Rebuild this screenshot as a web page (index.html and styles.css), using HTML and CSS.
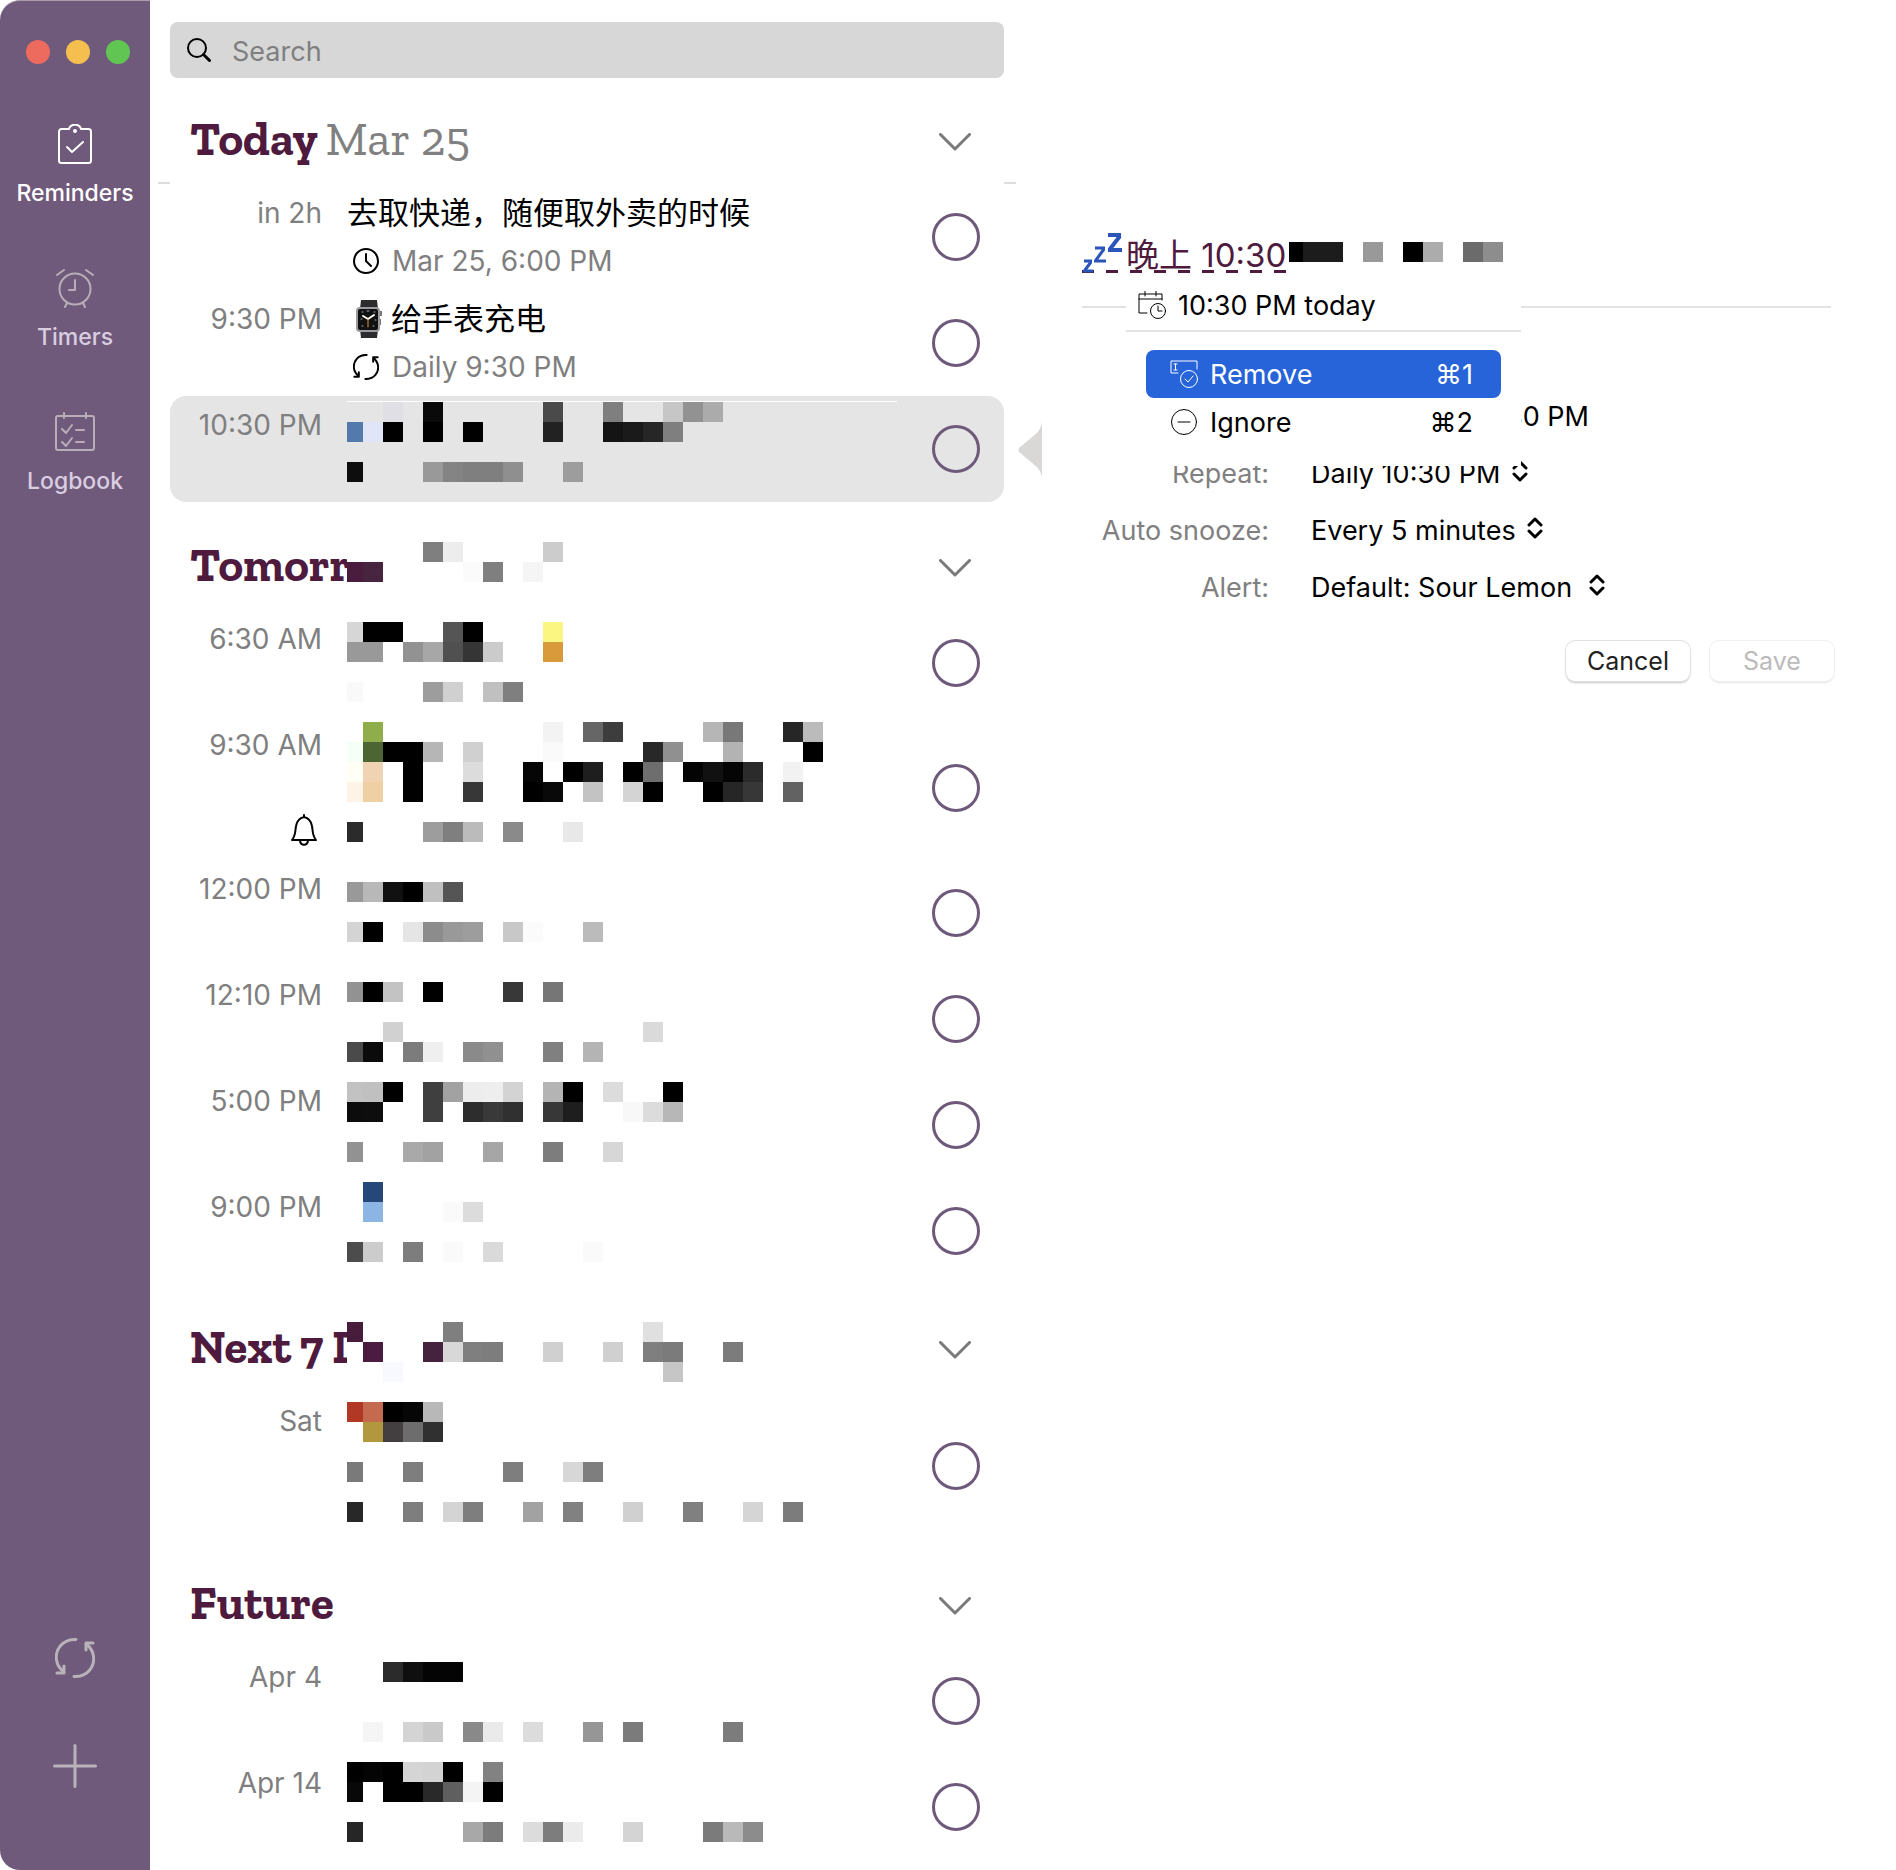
FILE: index.html
```html
<!DOCTYPE html>
<html lang="zh-CN">
<head>
<meta charset="utf-8">
<title>Reminders</title>
<link rel="stylesheet" href="styles.css">
</head>
<body>
<div class="window">
  <nav class="sidebar">
    <div class="lights"><span class="light light-close"></span><span class="light light-min"></span><span class="light light-max"></span></div>
    <a class="nav-item active" href="#reminders">
      <svg class="nav-icon" viewBox="0 0 40 40"><path d="M14 5H6.500a2.500 2.500 0 0 0-2.500 2.500v29A2.500 2.500 0 0 0 6.500 39h27a2.500 2.500 0 0 0 2.500-2.500v-29A2.500 2.500 0 0 0 33.500 5H26q-1-4-6-4.500-5 .5-6 4.500"/><circle cx="20" cy="7" r="1"/><path d="M12 23l5 5 11-10"/></svg>
      Reminders
    </a>
    <a class="nav-item" href="#timers">
      <svg class="nav-icon" viewBox="0 0 40 40"><circle cx="20" cy="21" r="15.500"/><path d="M20 12v10h-6M2 7l7-5M38 7l-7-5M12 35l-2 4M28 35l2 4"/></svg>
      Timers
    </a>
    <a class="nav-item" href="#logbook">
      <svg class="nav-icon" viewBox="0 0 40 40"><rect x="1" y="4" width="38" height="34" rx="2"/><path d="M9 1v5M31 1v5M7 17l4 4 6-8M7 30l4 4 6-8M21 18h8M21 30h8"/></svg>
      Logbook
    </a>
    <div class="side-tools">
      <button class="side-button" aria-label="Sync"><svg class="sync-icon" viewBox="0 0 40 40"><path d="M21 1.500C7 1 0 12 1.500 22c.7 5 3.500 9 7.500 12M2 35h7v-7M19 38.500c14 .5 21-10.500 19.500-20.500-.7-5-3.500-9-7.500-12M38 5h-7v7"/></svg></button>
      <button class="side-button" aria-label="Add"><svg class="plus-icon" viewBox="0 0 44 44"><path d="M22 1.500v41M1.500 22h41"/></svg></button>
    </div>
  </nav>

  <main class="list">
    <label class="search">
      <svg class="search-icon" viewBox="0 0 24 24"><circle cx="10" cy="10" r="9"/><path d="M16.500 16.500l6 6" stroke-width="3"/></svg>
      <input class="search-input" type="search" placeholder="Search" aria-label="Search">
    </label>

    <section class="section first">
      <header class="section-head"><h2>Today <span class="date">Mar 25</span></h2><button class="fold" aria-label="Collapse"><svg viewBox="0 0 32 18"><path d="M1.500 1.500L16 16 30.500 1.500"/></svg></button></header>
      <ul class="rows">
        <li class="row"><span class="time">in 2h</span>
          <div class="body"><div class="title">去取快递，随便取外卖的时候</div>
            <div class="sub"><svg class="sub-icon" viewBox="0 0 26 26"><circle cx="13" cy="13" r="12"/><path d="M13 6v7l5 5"/></svg>Mar 25, 6:00 PM</div></div>
          <input class="check" type="checkbox" aria-label="Done"></li>
        <li class="row"><span class="time">9:30 PM</span>
          <div class="body"><div class="title"><svg class="watch" viewBox="0 0 28 38"><path fill="#2c2c2e" d="M6 0h16l1 9H5zM5 29h18l-1 9H6z"/><rect x="1" y="7" width="24" height="25" rx="4" fill="#9c9c9e"/><rect x="3" y="9" width="20" height="21" rx="2" fill="#111"/><path fill="#777" d="M25 11h2v5h-2zM25 19h1v6h-1z"/><path d="M13 19l6-4M13 19l-5-3" stroke="#fff" stroke-width="2"/><path d="M13 19v8" stroke="#d99a3c"/><path d="M12 11h2M6 19h1M20 20h1M7 12h1M19 12h1M7 26h1M18 26h1" stroke="#aaa"/></svg>给手表充电</div>
            <div class="sub"><svg class="sub-icon" viewBox="0 0 40 40"><path class="thick" d="M21 1.500C7 1 0 12 1.500 22c.7 5 3.500 9 7.500 12M2 35h7v-7M19 38.500c14 .5 21-10.500 19.500-20.500-.7-5-3.500-9-7.500-12M38 5h-7v7"/></svg>Daily 9:30 PM</div></div>
          <input class="check" type="checkbox" aria-label="Done"></li>
        <li class="row selected"><span class="time">10:30 PM</span><div class="body"></div><input class="check" type="checkbox" aria-label="Done"></li>
      </ul>
    </section>

    <section class="section">
      <header class="section-head"><h2>Tomorrow</h2><button class="fold" aria-label="Collapse"><svg viewBox="0 0 32 18"><path d="M1.500 1.500L16 16 30.500 1.500"/></svg></button></header>
      <ul class="rows">
        <li class="row"><span class="time">6:30 AM</span><div class="body"></div><input class="check" type="checkbox" aria-label="Done"></li>
        <li class="row two-line"><div class="time">9:30 AM<svg class="bell" viewBox="0 0 28 32"><path d="M2 26c4-5 3-9 4-14 1-6 4-8 8-9 4 1 7 3 8 9 1 5 0 9 4 14zM14 1v2M10 27c1 5 7 5 8 0"/></svg></div><div class="body"></div><input class="check" type="checkbox" aria-label="Done"></li>
        <li class="row"><span class="time">12:00 PM</span><div class="body"></div><input class="check" type="checkbox" aria-label="Done"></li>
        <li class="row"><span class="time">12:10 PM</span><div class="body"></div><input class="check" type="checkbox" aria-label="Done"></li>
        <li class="row"><span class="time">5:00 PM</span><div class="body"></div><input class="check" type="checkbox" aria-label="Done"></li>
        <li class="row"><span class="time">9:00 PM</span><div class="body"></div><input class="check" type="checkbox" aria-label="Done"></li>
      </ul>
    </section>

    <section class="section">
      <header class="section-head"><h2>Next 7 Days</h2><button class="fold" aria-label="Collapse"><svg viewBox="0 0 32 18"><path d="M1.500 1.500L16 16 30.500 1.500"/></svg></button></header>
      <ul class="rows">
        <li class="row with-note"><span class="time">Sat</span><div class="body"></div><input class="check" type="checkbox" aria-label="Done"></li>
      </ul>
    </section>

    <section class="section">
      <header class="section-head"><h2>Future</h2><button class="fold" aria-label="Collapse"><svg viewBox="0 0 32 18"><path d="M1.500 1.500L16 16 30.500 1.500"/></svg></button></header>
      <ul class="rows">
        <li class="row"><span class="time">Apr 4</span><div class="body"></div><input class="check" type="checkbox" aria-label="Done"></li>
        <li class="row"><span class="time">Apr 14</span><div class="body"></div><input class="check" type="checkbox" aria-label="Done"></li>
      </ul>
    </section>

    <!-- Privacy mosaic laid over the list, one unit per cell -->
    <svg class="mosaic" viewBox="0.2 0 24.800 72" aria-hidden="true">
      <g fill="#fff"><path d="M0 7h12v4H0zM0 45h15v4H0z"/></g>
      <g><rect x="2" fill="#e1dfe6"/><rect x="4" fill="#0a0a0a"/><rect x="10" fill="#4a4a4a"/><rect x="13" fill="#7f7f7f"/><rect x="16" fill="#c6c6c6"/><rect x="17" fill="#929292"/><rect x="18" fill="#ababab"/></g>
      <g transform="translate(0 1)"><rect fill="#5479ac"/><rect x="1" fill="#e0e6f7"/><rect x="2"/><rect x="4"/><rect x="6"/><rect x="10" fill="#222"/><rect x="13" fill="#141414"/><rect x="14" fill="#1a1a1a"/><rect x="15" fill="#262626"/><rect x="16" fill="#7f7f7f"/></g>
      <g transform="translate(0 3)"><rect fill="#0d0d0d"/><rect x="4" fill="#999"/><rect x="5" fill="#848484"/><rect x="6" fill="#7f7f7f"/><rect x="7" fill="#7f7f7f"/><rect x="8" fill="#8f8f8f"/><rect x="11" fill="#9d9d9d"/></g>
      <g transform="translate(0 7)"><rect x="4" fill="#7f7f7f"/><rect x="5" fill="#ededed"/><rect x="10" fill="#ccc"/></g>
      <g transform="translate(0 8)"><rect fill="#4a1d3f"/><rect x="1" fill="#47243f"/><rect x="6" fill="#fbfbfb"/><rect x="7" fill="#7f7f7f"/><rect x="9" fill="#f5f5f5"/></g>
      <g transform="translate(0 11)"><rect fill="#d6d6d6"/><rect x="1"/><rect x="2"/><rect x="5" fill="#555"/><rect x="6"/><rect x="10" fill="#fbf682"/></g>
      <g transform="translate(0 12)"><rect fill="#999"/><rect x="1" fill="#999"/><rect x="3" fill="#929292"/><rect x="4" fill="#a7a7a7"/><rect x="5" fill="#505050"/><rect x="6" fill="#353535"/><rect x="7" fill="#cbcbcb"/><rect x="10" fill="#d99a3c"/></g>
      <g transform="translate(0 14)"><rect fill="#f9f9f9"/><rect x="4" fill="#9d9d9d"/><rect x="5" fill="#d0d0d0"/><rect x="7" fill="#c0c0c0"/><rect x="8" fill="#7f7f7f"/></g>
      <g transform="translate(0 16)"><rect x="1" fill="#8fae4b"/><rect x="10" fill="#f3f3f3"/><rect x="12" fill="#666"/><rect x="13" fill="#3d3d3d"/><rect x="18" fill="#b6b6b6"/><rect x="19" fill="#787878"/><rect x="22" fill="#262626"/><rect x="23" fill="#bbb"/></g>
      <g transform="translate(0 17)"><rect fill="#f5fff5"/><rect x="1" fill="#4d6532"/><rect x="2"/><rect x="3"/><rect x="4" fill="#b6b6b6"/><rect x="6" fill="#d0d0d0"/><rect x="10" fill="#fafafa"/><rect x="15" fill="#282828"/><rect x="16" fill="#909090"/><rect x="19" fill="#b3b3b3"/><rect x="23"/></g>
      <g transform="translate(0 18)"><rect fill="#fffff5"/><rect x="1" fill="#efd3b2"/><rect x="3"/><rect x="6" fill="#dcdcdc"/><rect x="9" fill="#060606"/><rect x="11"/><rect x="12" fill="#1e1e1e"/><rect x="14"/><rect x="15" fill="#6e6e6e"/><rect x="17" fill="#040404"/><rect x="18" fill="#111"/><rect x="19" fill="#050505"/><rect x="20" fill="#2b2b2b"/><rect x="22" fill="#f2f2f2"/></g>
      <g transform="translate(0 19)"><rect fill="#fdf3e6"/><rect x="1" fill="#efcfa4"/><rect x="3"/><rect x="6" fill="#373737"/><rect x="9"/><rect x="10" fill="#090909"/><rect x="12" fill="#c3c3c3"/><rect x="14" fill="#d4d4d4"/><rect x="15"/><rect x="18"/><rect x="19" fill="#262626"/><rect x="20" fill="#373737"/><rect x="22" fill="#626262"/></g>
      <g transform="translate(0 21)"><rect fill="#2b2b2b"/><rect x="4" fill="#9d9d9d"/><rect x="5" fill="#7f7f7f"/><rect x="6" fill="#bbb"/><rect x="8" fill="#8a8a8a"/><rect x="11" fill="#e8e8e8"/></g>
      <g transform="translate(0 24)"><rect fill="#999"/><rect x="1" fill="#b8b8b8"/><rect x="2" fill="#111"/><rect x="3"/><rect x="4" fill="#c0c0c0"/><rect x="5" fill="#555"/></g>
      <g transform="translate(0 26)"><rect fill="#d4d4d4"/><rect x="1"/><rect x="3" fill="#e5e5e5"/><rect x="4" fill="#8c8c8c"/><rect x="5" fill="#999"/><rect x="6" fill="#9d9d9d"/><rect x="8" fill="#c8c8c8"/><rect x="9" fill="#fbfbfb"/><rect x="12" fill="#bbb"/></g>
      <g transform="translate(0 29)"><rect fill="#929292"/><rect x="1"/><rect x="2" fill="#c3c3c3"/><rect x="4"/><rect x="8" fill="#383838"/><rect x="10" fill="#767676"/></g>
      <g transform="translate(0 31)"><rect x="2" fill="#d1d1d1"/><rect x="15" fill="#dadada"/></g>
      <g transform="translate(0 32)"><rect fill="#4a4a4a"/><rect x="1" fill="#0b0b0b"/><rect x="3" fill="#7c7c7c"/><rect x="4" fill="#efefef"/><rect x="6" fill="#8a8a8a"/><rect x="7" fill="#909090"/><rect x="10" fill="#808080"/><rect x="12" fill="#b4b4b4"/></g>
      <g transform="translate(0 34)"><rect fill="#c2c2c2"/><rect x="1" fill="#c0c0c0"/><rect x="2"/><rect x="4" fill="#3f3f3f"/><rect x="5" fill="#a2a2a2"/><rect x="6" fill="#ededed"/><rect x="7" fill="#eee"/><rect x="8" fill="#d3d3d3"/><rect x="10" fill="#b4b4b4"/><rect x="11"/><rect x="13" fill="#dcdcdc"/><rect x="16"/></g>
      <g transform="translate(0 35)"><rect fill="#0c0c0c"/><rect x="1" fill="#0d0d0d"/><rect x="4" fill="#3f3f3f"/><rect x="6" fill="#2d2d2d"/><rect x="7" fill="#393939"/><rect x="8" fill="#303030"/><rect x="10" fill="#373737"/><rect x="11" fill="#1e1e1e"/><rect x="14" fill="#f8f8f8"/><rect x="15" fill="#dcdcdc"/><rect x="16" fill="#b7b7b7"/></g>
      <g transform="translate(0 37)"><rect fill="#929292"/><rect x="3" fill="#a9a9a9"/><rect x="4" fill="#a2a2a2"/><rect x="7" fill="#a6a6a6"/><rect x="10" fill="#7d7d7d"/><rect x="13" fill="#d7d7d7"/></g>
      <g transform="translate(0 39)"><rect x="1" fill="#254879"/></g>
      <g transform="translate(0 40)"><rect x="1" fill="#8cb5e3"/><rect x="5" fill="#fafafa"/><rect x="6" fill="#dcdcdc"/></g>
      <g transform="translate(0 42)"><rect fill="#4c4c4c"/><rect x="1" fill="#ccc"/><rect x="3" fill="#7d7d7d"/><rect x="5" fill="#fafafa"/><rect x="7" fill="#dadada"/><rect x="12" fill="#fafafa"/></g>
      <g transform="translate(0 46)"><rect fill="#471d3b"/><rect x="5" fill="#7f7f7f"/><rect x="15" fill="#e0e0e0"/></g>
      <g transform="translate(0 47)"><rect x="1" fill="#4b1b42"/><rect x="4" fill="#45223d"/><rect x="5" fill="#d8d8d8"/><rect x="6" fill="#7f7f7f"/><rect x="7" fill="#7d7d7d"/><rect x="10" fill="#d0d0d0"/><rect x="13" fill="#d0d0d0"/><rect x="15" fill="#7f7f7f"/><rect x="16" fill="#7b7b7b"/><rect x="19" fill="#7c7c7c"/></g>
      <g transform="translate(0 48)"><rect x="2" fill="#f7f9ff"/><rect x="16" fill="#c6c6c6"/></g>
      <g transform="translate(0 50)"><rect fill="#b03824"/><rect x="1" fill="#c46a4f"/><rect x="2"/><rect x="3" fill="#060606"/><rect x="4" fill="#b8b8b8"/></g>
      <g transform="translate(0 51)"><rect x="1" fill="#b1973e"/><rect x="2" fill="#433e3f"/><rect x="3" fill="#6d6d6d"/><rect x="4" fill="#303030"/></g>
      <g transform="translate(0 53)"><rect fill="#7a7a7a"/><rect x="3" fill="#7e7e7e"/><rect x="8" fill="#7e7e7e"/><rect x="11" fill="#d7d7d7"/><rect x="12" fill="#7e7e7e"/></g>
      <g transform="translate(0 55)"><rect fill="#282828"/><rect x="3" fill="#7e7e7e"/><rect x="5" fill="#d4d4d4"/><rect x="6" fill="#7e7e7e"/><rect x="9" fill="#a2a2a2"/><rect x="11" fill="#818181"/><rect x="14" fill="#d0d0d0"/><rect x="17" fill="#808080"/><rect x="20" fill="#d5d5d5"/><rect x="22" fill="#7c7c7c"/></g>
      <g transform="translate(0 63)"><rect x="2" fill="#2b2b2b"/><rect x="3" fill="#0f0f0f"/><rect x="4" fill="#040404"/><rect x="5" fill="#040404"/></g>
      <g transform="translate(0 66)"><rect x="1" fill="#f5f5f5"/><rect x="3" fill="#d4d4d4"/><rect x="4" fill="#c9c9c9"/><rect x="6" fill="#898989"/><rect x="7" fill="#eaeaea"/><rect x="9" fill="#dcdcdc"/><rect x="12" fill="#969696"/><rect x="14" fill="#7b7b7b"/><rect x="19" fill="#7c7c7c"/></g>
      <g transform="translate(0 68)"><rect/><rect x="1" fill="#040404"/><rect x="2"/><rect x="3" fill="#d5d5d5"/><rect x="4" fill="#d3d3d3"/><rect x="5"/><rect x="7" fill="#828282"/></g>
      <g transform="translate(0 69)"><rect fill="#080808"/><rect x="2"/><rect x="3"/><rect x="4" fill="#292929"/><rect x="5" fill="#5f5f5f"/><rect x="6" fill="#f4f4f4"/><rect x="7"/></g>
      <g transform="translate(0 71)"><rect fill="#262626"/><rect x="6" fill="#a8a8a8"/><rect x="7" fill="#7c7c7c"/><rect x="9" fill="#dcdcdc"/><rect x="10" fill="#7d7d7d"/><rect x="11" fill="#ebebeb"/><rect x="14" fill="#d4d4d4"/><rect x="18" fill="#7b7b7b"/><rect x="19" fill="#b9b9b9"/><rect x="20" fill="#8c8c8c"/></g>
    </svg>
  </main>

  <aside class="detail">
    <svg class="pointer" viewBox="0 0 24 58"><path d="M24 0q0 6-5 12L1 27q-1 2 0 4l18 15q5 6 5 12z"/></svg>
    <div class="heading">
      <div class="heading-text"><svg class="zzz" viewBox="0 0 40 40"><path d="M26 2h13M38 3L28 16M26 17h14" stroke-width="4"/><path d="M13 15h10M22 16l-8 11M12 28h12M2 28h8M9 29l-6 8M1 38h10" stroke-width="3"/></svg>晚上 10:30</div>
      <svg class="heading-mosaic" viewBox="0 0 214 20" aria-hidden="true"><path d="M0 0h14v20H0zM114 0h20v20h-20z"/><path fill="#1c1c1c" d="M14 0h40v20H14z"/><path fill="#999" d="M74 0h20v20H74z"/><path fill="#acacac" d="M134 0h20v20h-20z"/><path fill="#6b6b6b" d="M174 0h20v20h-20z"/><path fill="#8d8d8d" d="M194 0h20v20h-20z"/></svg>
    </div>
    <hr class="rule">
    <form class="form">
      <div class="field"><span class="label"></span><span class="when">10:30 PM</span></div>
      <div class="field"><label class="label" for="repeat">Repeat:</label><select class="value" id="repeat"><option>Daily 10:30 PM</option></select><svg class="updown" viewBox="0 0 16 22"><path d="M2 8l6-6 6 6M2 14l6 6 6-6"/></svg></div>
      <div class="field"><label class="label" for="snooze">Auto snooze:</label><select class="value" id="snooze"><option>Every 5 minutes</option></select><svg class="updown" viewBox="0 0 16 22"><path d="M2 8l6-6 6 6M2 14l6 6 6-6"/></svg></div>
      <div class="field"><label class="label" for="alert">Alert:</label><select class="value" id="alert"><option>Default: Sour Lemon</option></select><svg class="updown wide" viewBox="0 0 16 22"><path d="M2 8l6-6 6 6M2 14l6 6 6-6"/></svg></div>
      <div class="actions"><button class="button" type="button">Cancel</button><button class="button" type="submit" disabled>Save</button></div>
    </form>
    <div class="menu">
      <div class="menu-head"><svg class="menu-icon" viewBox="0 0 28 28"><path d="M9 22H1V3h23v6M1 8h23M7 0v5M18 0v5"/><circle cx="20" cy="20" r="7.500"/><path d="M20 15v5h4"/></svg>10:30 PM today</div>
      <button class="menu-item chosen"><svg class="menu-icon" viewBox="0 0 28 28"><path d="M8 13H1V1h26v8M4 4h3M4 10h3M5.500 4v6"/><circle cx="19" cy="19" r="8.500"/><path d="M15 19l3 3 5-6"/></svg>Remove<kbd>⌘1</kbd></button>
      <button class="menu-item"><svg class="menu-icon" viewBox="0 0 28 28"><circle cx="14" cy="14" r="12.500"/><path d="M8 14h12"/></svg>Ignore<kbd>⌘2</kbd></button>
    </div>
  </aside>
</div>
</body>
</html>
```
FILE: styles.css
```css
* { box-sizing: border-box; }

body {
  margin: 0;
  background: #fff;
  color: #000;
  font-family: Inter, "Noto Sans CJK SC", "Liberation Sans", sans-serif;
  font-size: 27px;
}

button, input, select { font: inherit; color: inherit; margin: 0; }
button { border: 0; padding: 0; background: none; }
svg { display: block; fill: none; flex: none; stroke-linecap: round; stroke-linejoin: round; }

.window {
  display: grid;
  grid-template-columns: 150px 868fr 878fr;
  min-height: 100vh;
}

/* Sidebar */
.sidebar {
  display: flex;
  flex-direction: column;
  background: #705a7c;
  border-top: 1px solid #a99bb0;
  border-radius: 20px 0 0 20px;
}
.lights { display: flex; justify-content: center; gap: 16px; padding: 39px 0 60px 6px; }
.light { width: 24px; height: 24px; border-radius: 50%; }
.light-close { background: #ed6a5e; }
.light-min { background: #f4bf4f; }
.light-max { background: #61c554; }

.nav-item {
  display: flex;
  flex-direction: column;
  align-items: center;
  gap: 14px;
  height: 144px;
  color: #d9cde0;
  font-size: 23px;
  font-weight: 500;
  line-height: 30px;
  text-decoration: none;
}
.nav-item.active { color: #fff; }
.nav-icon { width: 40px; height: 40px; stroke: #b9aeb8; stroke-width: 2; }
.active .nav-icon { stroke: #fff; }

.side-tools { display: flex; flex-direction: column; align-items: center; gap: 66px; margin-top: auto; padding-bottom: 82px; }
.sync-icon { width: 40px; height: 40px; stroke: #b9b2b9; stroke-width: 3; }
.plus-icon { width: 44px; height: 44px; stroke: #b9b2b9; stroke-width: 3; }

/* List */
.list { position: relative; padding: 22px 14px 10px 20px; }
.search {
  display: flex;
  align-items: center;
  gap: 21px;
  height: 56px;
  padding: 0 17px;
  border-radius: 8px;
  background: #d7d7d7;
}
.search-icon { width: 24px; height: 24px; stroke: #000; stroke-width: 2; }
.search-input { flex: 1; min-width: 0; padding: 2px 0 0; border: 0; outline: 0; background: none; appearance: none; }
.search-input::placeholder { color: #7f7f7f; opacity: 1; }

.section-head {
  display: flex;
  align-items: center;
  justify-content: space-between;
  padding: 39px 33px 21px 20px;
}
.first .section-head { padding-top: 37px; }
h2 {
  margin: 0;
  color: #4e1b3e;
  font-family: "Zilla Slab", "DejaVu Serif Condensed", "DejaVu Serif", serif;
  font-size: 47px;
  font-weight: 700;
  line-height: 48px;
}
.date { color: #808080; font-size: 48px; font-weight: 400; }
.fold { padding-top: 5px; }
.fold svg { width: 32px; height: 18px; stroke: #7a7a7a; stroke-width: 3; }

.rows { margin: 0; padding: 0; list-style: none; }
.first .rows { position: relative; }
.first .rows::before, .first .rows::after {
  content: "";
  position: absolute;
  top: -2px;
  width: 12px;
  height: 2px;
  background: #ddd;
}
.first .rows::before { left: -12px; }
.first .rows::after { right: -12px; }

.row {
  display: grid;
  grid-template-columns: 152px 1fr 48px;
  column-gap: 25px;
  min-height: 106px;
  padding: 5px 24px 5px 0;
}
.row.two-line { min-height: 144px; }
.row.with-note { min-height: 148px; }
.row.selected { border-radius: 16px; background: #e5e5e5; }
.selected .body { border-top: 1px solid #fff; margin-right: 10px; }
.time { color: #7f7f7f; font-size: 28px; line-height: 48px; text-align: right; }
.bell { width: 28px; height: 32px; margin: 45px 4px 0 auto; stroke: #000; stroke-width: 2; }
.title { display: flex; align-items: center; font-size: 31px; line-height: 48px; }
.watch { width: 28px; height: 38px; margin: 0 8px; }
.sub { display: flex; align-items: center; gap: 13px; padding-left: 6px; color: #7f7f7f; font-size: 28px; line-height: 48px; }
.sub-icon { width: 26px; height: 26px; stroke: #000; stroke-width: 2; }
.thick { stroke-width: 3; }
.check {
  appearance: none;
  align-self: center;
  width: 48px;
  height: 48px;
  border: 3px solid #6e597a;
  border-radius: 50%;
}

.mosaic { position: absolute; top: 402px; left: 197px; width: 496px; height: 1440px; fill: #000; shape-rendering: crispEdges; }
.mosaic rect { width: 1px; height: 1px; }

/* Detail pane */
.detail { position: relative; padding: 231px 61px 40px 64px; }
.pointer { position: absolute; top: 421px; left: 0; width: 24px; height: 58px; fill: #d9d8d7; }
.heading { display: flex; gap: 3px; }
.heading-text {
  display: flex;
  align-items: center;
  height: 42px;
  padding-top: 2px;
  color: #4e1b3e;
  font-size: 33px;
  background: repeating-linear-gradient(90deg, #4e1b3e 0 12px, transparent 12px 24px) bottom / 100% 3px no-repeat;
}
.zzz { width: 40px; height: 40px; margin-right: 4px; stroke: #2b55b8; stroke-linecap: butt; }
.heading-mosaic { width: 214px; height: 20px; margin-top: 11px; fill: #000; }
.rule { height: 2px; margin: 33px 4px 80px 0; border: 0; background: #e3e3e3; }

.field { display: flex; align-items: center; height: 57px; }
.label { width: 187px; margin-right: 42px; color: #808080; text-align: right; }
.value { padding: 0; border: 0; background: none; appearance: none; line-height: 36px; }
.when { width: 278px; text-align: right; }
.updown { width: 16px; height: 22px; margin: 0 0 6px 11px; stroke: #000; stroke-width: 3; }
.updown.wide { margin-left: 16px; }

.actions { display: flex; justify-content: flex-end; gap: 20px; padding: 25px 1px 0 0; }
.button {
  width: 124px;
  height: 40px;
  border-radius: 9px;
  background: #fff;
  box-shadow: 0 0 0 1px #e2e2e2, 0 2px 2px #c4c4c4;
  color: #222;
  font-size: 25px;
}
.button:disabled { box-shadow: 0 0 0 1px #f0f0f0, 0 2px 2px #e4e4e4; color: #bbb; }

/* Date suggestion menu */
.menu { position: absolute; top: 282px; left: 108px; width: 395px; padding-bottom: 20px; background: #fff; }
.menu-head { display: flex; align-items: center; gap: 12px; height: 50px; padding: 0 0 2px 12px; margin-bottom: 18px; border-bottom: 2px solid #e3e3e3; }
.menu-icon { width: 28px; height: 28px; stroke: currentColor; stroke-width: 1; }
.menu-item { display: flex; align-items: center; gap: 12px; width: 355px; height: 48px; margin: 0 20px; padding: 0 28px 0 24px; border-radius: 8px; }
.menu-item.chosen { background: #2763d9; color: #fff; }
kbd { margin-left: auto; font: inherit; }
```
